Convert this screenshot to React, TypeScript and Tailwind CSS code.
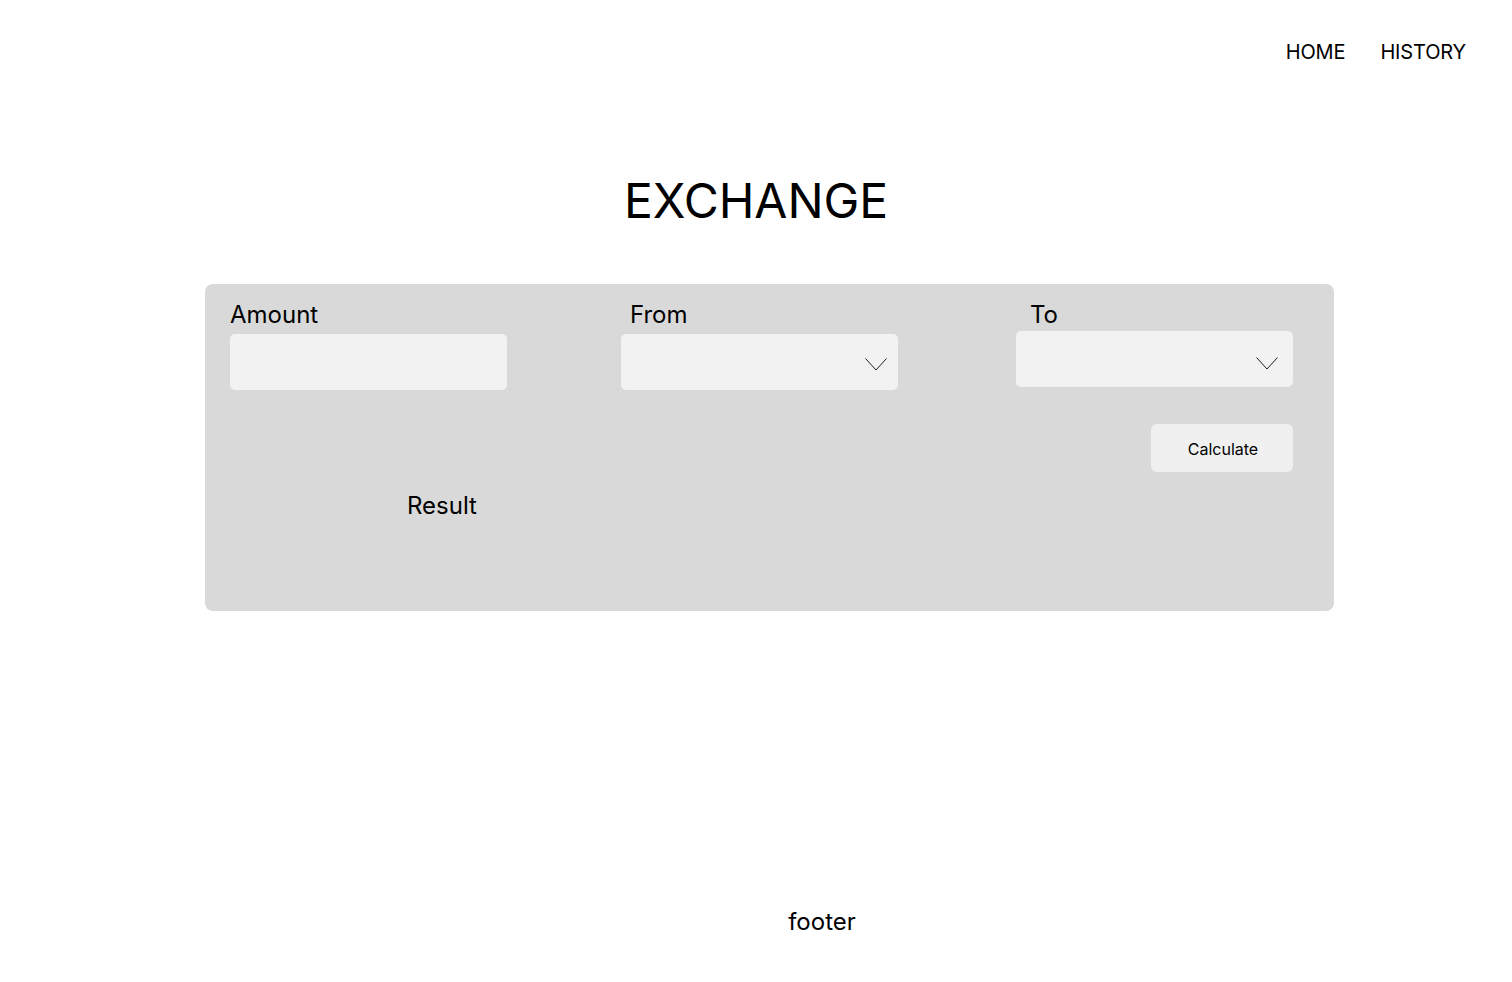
import React from 'react';

function Chevron({ className }: { className: string }) {
  return (
    <svg className={className} width="22" height="13" viewBox="0 0 22 13" fill="none">
      <polyline points="0.5,0.5 11,12 21.5,0.5" stroke="#1f1f1f" strokeWidth="1" />
    </svg>
  );
}

export default function App() {
  return (
    <div className="min-h-screen bg-white font-['Inter','Noto_Sans',sans-serif] text-black">
      <header className="flex justify-end gap-[35px] pr-[46px] pt-[40px] text-[20px] leading-[24px] tracking-[-0.15px]">
        <a href="#">HOME</a>
        <a href="#">HISTORY</a>
      </header>

      <main>
        <h1 className="mt-[108px] text-center text-[48px] leading-[58px] font-normal tracking-[-0.1px]">EXCHANGE</h1>

        <section className="ml-[205px] mt-[54px] h-[327px] w-[1129px] rounded-[8px] bg-[#d9d9d9] pl-[25px] pr-[41px] pt-[16px]">
          <div className="flex items-start">
            <div className="w-[277px]">
              <label className="block text-[24px] leading-[29px]">Amount</label>
              <div className="mt-[5px] h-[56px] rounded-[5px] bg-[#f2f2f2]" />
            </div>
            <div className="ml-[114px] w-[277px]">
              <label className="block pl-[9px] text-[24px] leading-[29px]">From</label>
              <div className="relative mt-[5px] h-[56px] rounded-[5px] bg-[#f2f2f2]">
                <Chevron className="absolute right-[11px] top-[24px]" />
              </div>
            </div>
            <div className="ml-[118px] w-[277px]">
              <label className="block pl-[14px] text-[24px] leading-[29px]">To</label>
              <div className="relative mt-[2px] h-[56px] rounded-[5px] bg-[#f2f2f2]">
                <Chevron className="absolute right-[15px] top-[26px]" />
              </div>
            </div>
          </div>

          <div className="mt-[34px] flex justify-end">
            <button className="h-[48px] w-[142px] rounded-[6px] bg-[#f0f0f0] pl-[2px] pt-[2px] text-[16px] leading-[20px]">
              Calculate
            </button>
          </div>

          <p className="mt-[19px] pl-[177px] text-[24px] leading-[29px]">Result</p>
        </section>
      </main>

      <footer className="mt-[296px] pl-[132px] text-center text-[24px] leading-[29px]">footer</footer>
    </div>
  );
}
